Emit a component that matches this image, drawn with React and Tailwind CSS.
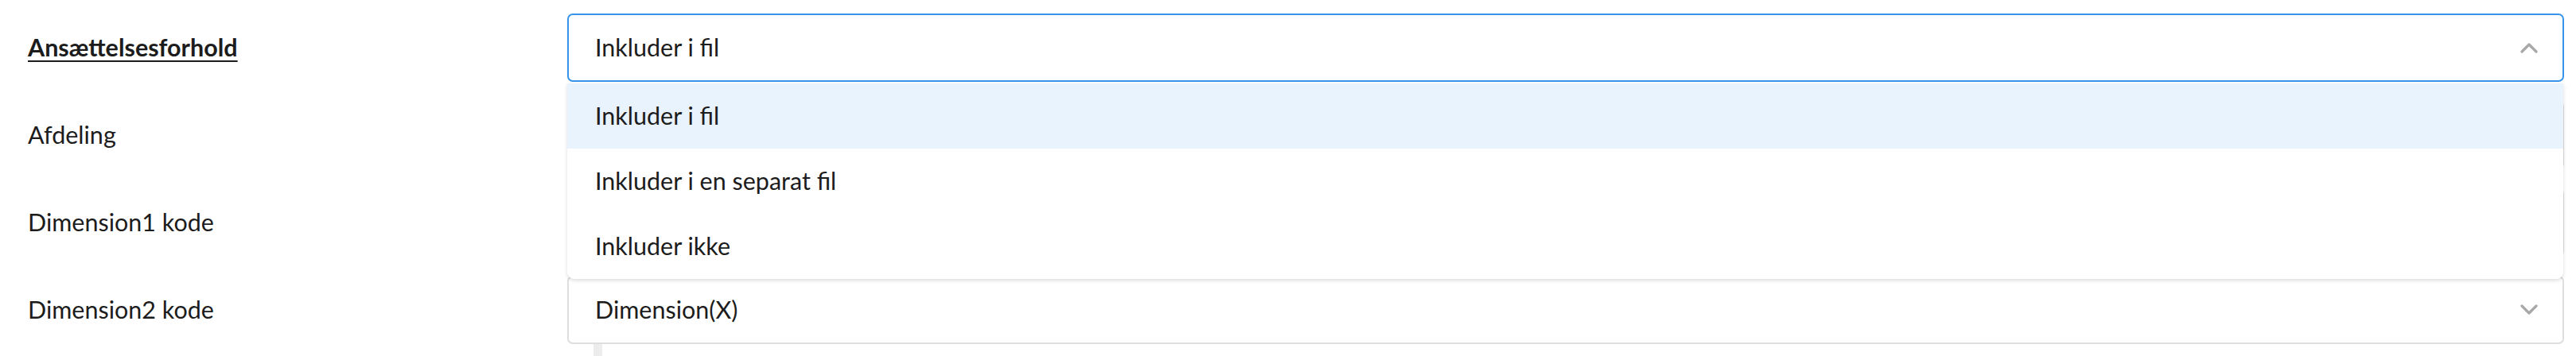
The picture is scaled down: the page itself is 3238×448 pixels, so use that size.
import React from 'react';

// rows 2 and 3 sit under the open menu, so their values are not shown
const rows = [
  { label: 'Ansættelsesforhold', value: 'Inkluder i fil', open: true },
  { label: 'Afdeling', value: '' },
  { label: 'Dimension1 kode', value: '' },
  { label: 'Dimension2 kode', value: 'Dimension(X)' },
];

const options = ['Inkluder i fil', 'Inkluder i en separat fil', 'Inkluder ikke'];

const Chevron = ({ up }) => (
  <svg width="22" height="14" viewBox="0 0 22 14" fill="none" className="shrink-0">
    <polyline
      points={up ? '2,12 11,3 20,12' : '2,2 11,11 20,2'}
      stroke="#a8a8a8"
      strokeWidth="3.2"
      strokeLinecap="round"
      strokeLinejoin="round"
    />
  </svg>
);

const SelectField = ({ value, open }) => (
  <div className="relative flex-1">
    <div
      className={`flex items-center justify-between h-[86px] pl-[33px] pr-[31px] rounded-[7px] bg-white border-2 ${
        open ? 'border-[#3894ea]' : 'border-[#dedede]'
      }`}
    >
      <span>{value}</span>
      <Chevron up={open} />
    </div>

    {open && (
      <div className="absolute z-10 left-0 right-[1px] top-[calc(100%+2px)] bg-white rounded-b-[9px] overflow-hidden shadow-[0_2px_5px_rgba(0,0,0,0.14)]">
        {options.map((opt, i) => (
          <div
            key={opt}
            className={`h-[82px] flex items-center pl-[35px] ${i === 0 ? 'bg-[#e9f3fd]' : 'bg-white'}`}
          >
            {opt}
          </div>
        ))}
      </div>
    )}
  </div>
);

export default function App() {
  return (
    <div
      className="w-[3238px] h-[448px] bg-white text-[#1c1c1c] text-[30.5px] overflow-hidden"
      style={{ fontFamily: 'Lato, "Open Sans", sans-serif' }}
    >
      <div className="flex flex-col gap-[24px] pt-[17px] pl-[35px] pr-[15px]">
        {rows.map((row, i) => (
          <div key={row.label} className="flex items-center">
            <div className="w-[678px] shrink-0">
              <span className={i === 0 ? 'font-bold underline underline-offset-[5px] decoration-2' : ''}>
                {row.label}
              </span>
            </div>
            <SelectField value={row.value} open={row.open} />
          </div>
        ))}
      </div>
      {/* bit of the next section peeking out */}
      <div className="ml-[746px] w-[11px] h-[20px] bg-[#ececec]" />
    </div>
  );
}
